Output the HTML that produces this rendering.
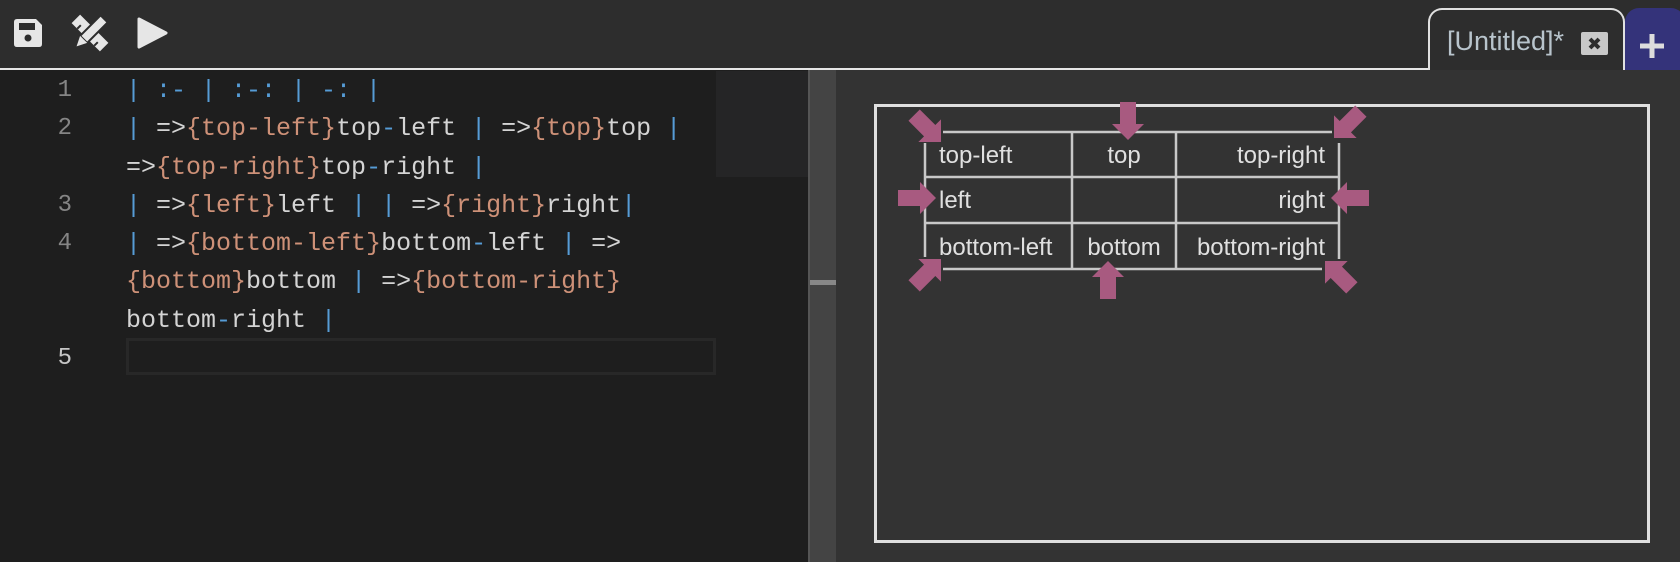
<!DOCTYPE html>
<html><head><meta charset="utf-8"><style>
*{margin:0;padding:0;box-sizing:border-box}
body{width:1680px;height:562px;overflow:hidden;background:#1e1e1e;font-family:"Liberation Sans",sans-serif;position:relative}
.tb{position:absolute;left:0;top:0;width:1680px;height:68px;background:#2d2d2d}
.tbline{position:absolute;left:0;top:68px;width:1428px;height:2px;background:#e6e6e6}
.tab{position:absolute;left:1428px;top:8px;width:197px;height:64px;border:2px solid #e0e0e0;border-bottom:none;border-radius:14px 14px 0 0;background:#2d2d2d}
.tab span{position:absolute;left:17px;top:16px;font-size:27px;color:#b8c4cc}
.cls{position:absolute;left:151px;top:22px;width:27px;height:23px;background:#c8c8c8;border-radius:2px}
.plus{position:absolute;left:1625px;top:8px;width:60px;height:62px;background:#34337a;border-radius:14px 14px 0 0}
.code{position:absolute;left:0;top:72px;font-family:"Liberation Mono",monospace;font-size:25px;line-height:38.3px;color:#d4d4d4;white-space:pre}
.ln{position:absolute;left:40px;width:32px;text-align:right;color:#858585;font-family:"Liberation Mono",monospace;font-size:24px;line-height:38.3px}
.b{color:#569cd6}.o{color:#ce9178}
.cur{position:absolute;left:126px;top:338px;width:590px;height:37px;border:3px solid #282828}
.mini{position:absolute;left:716px;top:71px;width:93px;height:106px;background:#252526}
.split{position:absolute;left:808px;top:70px;width:28px;height:492px;background:#444;border-left:2px solid #555}
.right{position:absolute;left:836px;top:70px;width:844px;height:492px;background:#333}
.frame{position:absolute;left:874px;top:104px;width:776px;height:439px;border:3px solid #e0e0e0}
.t{position:absolute;font-size:24px;color:#e0e0e0;font-family:"Liberation Sans","DejaVu Sans",sans-serif}
</style></head><body>
<div class="tb"></div>
<svg style="position:absolute;left:0;top:0" width="200" height="68">
 <path d="M14 22 q0-3 3-3 h19 l6 6 v19 q0 3-3 3 h-22 q-3 0-3-3z" fill="#e6e6e6"/>
 <rect x="19" y="23" width="16" height="7" fill="#2d2d2d"/>
 <circle cx="28" cy="38" r="3.5" fill="#2d2d2d"/>
 <g transform="translate(90,33) rotate(-45)">
  <rect x="-6" y="-20" width="12" height="40" fill="#e6e6e6"/>
  <path d="M-6 -12 h5 M-6 -4 h5 M-6 4 h5 M-6 12 h5" stroke="#2d2d2d" stroke-width="2"/>
 </g>
 <g transform="translate(90,33) rotate(45)">
  <rect x="-5" y="-20" width="10" height="29" fill="#e6e6e6" stroke="#2d2d2d" stroke-width="2"/><path d="M-5 9 L0 19 L5 9z" fill="#e6e6e6"/>
 </g>
 <path d="M139 19 L166 33 L139 47z" fill="#e6e6e6" stroke="#e6e6e6" stroke-width="3" stroke-linejoin="round"/>
</svg>
<div class="tbline"></div>
<div class="tab"><span>[Untitled]*</span><div class="cls"><svg width="27" height="23"><path d="M9 7 L18 16 M18 7 L9 16" stroke="#2d2d2d" stroke-width="4"/></svg></div></div>
<div class="plus"><svg width="55" height="62"><path d="M27 26 V50 M15 38 H39" stroke="#ddd" stroke-width="5"/></svg></div>

<div class="cur"></div>
<div class="ln" style="top:72px">1</div>
<div class="ln" style="top:110.3px">2</div>
<div class="ln" style="top:187px">3</div>
<div class="ln" style="top:225.3px">4</div>
<div class="ln" style="top:340px;color:#c6c6c6">5</div>
<div class="code" style="left:126px"><span class="b">| :- | :-: | -: |</span>
<span class="b">|</span> =&gt;<span class="o">{top-left}</span>top<span class="b">-</span>left <span class="b">|</span> =&gt;<span class="o">{top}</span>top <span class="b">|</span>
=&gt;<span class="o">{top-right}</span>top<span class="b">-</span>right <span class="b">|</span>
<span class="b">|</span> =&gt;<span class="o">{left}</span>left <span class="b">|</span> <span class="b">|</span> =&gt;<span class="o">{right}</span>right<span class="b">|</span>
<span class="b">|</span> =&gt;<span class="o">{bottom-left}</span>bottom<span class="b">-</span>left <span class="b">|</span> =&gt;
<span class="o">{bottom}</span>bottom <span class="b">|</span> =&gt;<span class="o">{bottom-right}</span>
bottom<span class="b">-</span>right <span class="b">|</span></div>
<div class="mini"></div>
<div class="split"><div style="position:absolute;left:0;top:210px;width:27px;height:5px;background:#888"></div></div>
<div class="right"></div>
<div class="frame"></div>
<svg style="position:absolute;left:0;top:0" width="1680" height="562">
 <g stroke="#c8c8c8" stroke-width="2.5">
  <path d="M943 132 H1332 M925 177 H1339 M925 223 H1339 M943 269 H1322 M925 143 V257 M1339 143 V259 M1072 132 V269 M1176 132 V269"/>
 </g>
 <g fill="#a85a80">
  <defs><path id="a" d="M0 0 L-16 -16 L-16 -8 L-38 -8 L-38 8 L-16 8 L-16 16z"/></defs>
  <use href="#a" transform="translate(941,142) rotate(45)"/>
  <use href="#a" transform="translate(1128,140) rotate(90)"/>
  <use href="#a" transform="translate(1334,138) rotate(135)"/>
  <use href="#a" transform="translate(936,198)"/>
  <use href="#a" transform="translate(1331,198) rotate(180)"/>
  <use href="#a" transform="translate(941,259) rotate(-45)"/>
  <use href="#a" transform="translate(1108,261) rotate(-90)"/>
  <use href="#a" transform="translate(1325,261) rotate(-135)"/>
 </g>
</svg>
<div class="t" style="left:939px;top:142px">top-left</div>
<div class="t" style="left:1072px;width:104px;text-align:center;top:142px">top</div>
<div class="t" style="left:1176px;width:149px;text-align:right;top:142px">top-right</div>
<div class="t" style="left:939px;top:187px">left</div>
<div class="t" style="left:1176px;width:149px;text-align:right;top:187px">right</div>
<div class="t" style="left:939px;top:234px">bottom-left</div>
<div class="t" style="left:1072px;width:104px;text-align:center;top:234px">bottom</div>
<div class="t" style="left:1176px;width:149px;text-align:right;top:234px">bottom-right</div>
</body></html>
